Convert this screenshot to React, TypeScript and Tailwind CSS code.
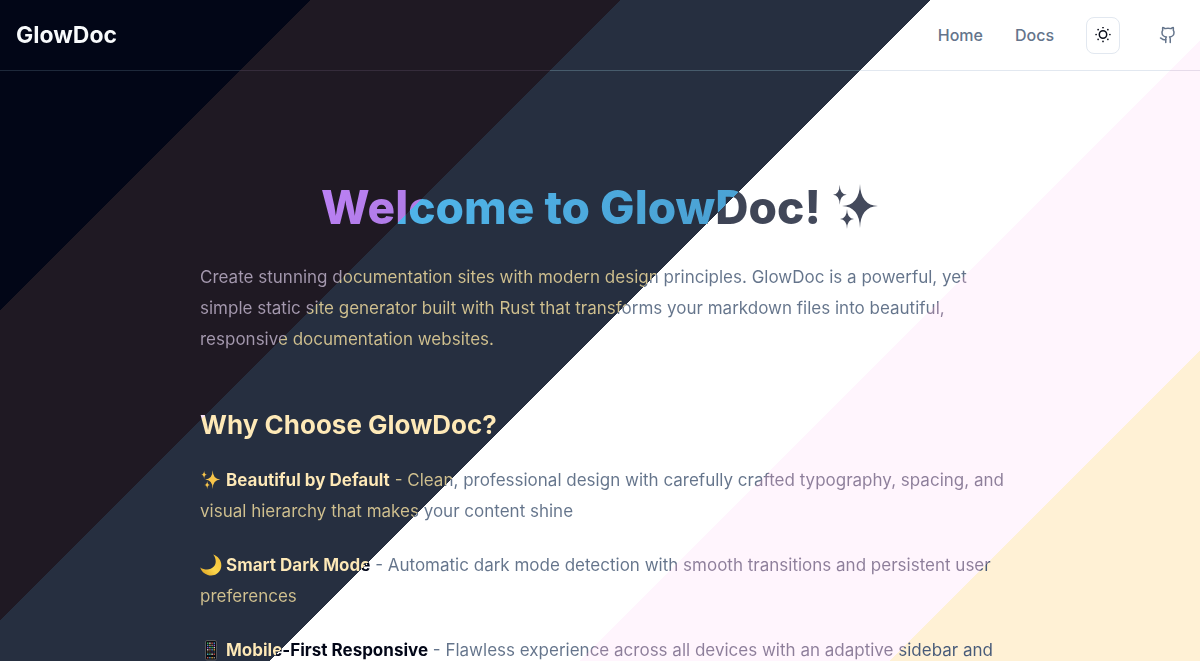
import React from "react";

/* Each swatch holds six theme colours, laid out as equal diagonal bands across the window. */
const surface =
  "bg-fixed bg-[linear-gradient(135deg,#020617_0_16.667%,#1f1923_16.667%_33.333%,#262f40_33.333%_50%,#ffffff_50%_66.667%,#fff5fd_66.667%_83.333%,#fff1d5_83.333%)]";
const line =
  "bg-fixed bg-[linear-gradient(135deg,#1e293b_0_16.667%,#352c3b_16.667%_33.333%,#475c6c_33.333%_50%,#e2e8f0_50%_66.667%,#e6dbea_66.667%_83.333%,#ecd9ac_83.333%)]";
const strongInk =
  "text-transparent bg-clip-text bg-fixed bg-[linear-gradient(135deg,#f8fafc_0_16.667%,#f5e1f7_16.667%_33.333%,#fee9b7_33.333%_50%,#020617_50%_66.667%,#3b2a45_66.667%_83.333%,#26324a_83.333%)]";
const bodyInk =
  "text-transparent bg-clip-text bg-fixed bg-[linear-gradient(135deg,#94a3b8_0_16.667%,#a599af_16.667%_33.333%,#d1c18f_33.333%_50%,#64748b_50%_66.667%,#8d7e9a_66.667%_83.333%,#475a78_83.333%)]";
const titleInk =
  "text-transparent bg-clip-text bg-fixed bg-[linear-gradient(135deg,#f8fafc_0_16.667%,#c084fc_25%,#b07be6_33.333%,#4fb4e9_33.333%,#4ba2d4_50%,#3d4354_50%,#4e5568_66.667%)]";

/* Four-pointed star with concave sides. */
const star = (x: number, y: number, rx: number, ry: number) =>
  `M${x} ${y - ry}Q${x + rx * 0.03} ${y - ry * 0.03} ${x + rx} ${y}Q${x + rx * 0.03} ${y + ry * 0.03} ${x} ${y + ry}Q${x - rx * 0.03} ${y + ry * 0.03} ${x - rx} ${y}Q${x - rx * 0.03} ${y - ry * 0.03} ${x} ${y - ry}Z`;

function Sparkles({ className, viewBox }: { className: string; viewBox: string }) {
  return (
    <svg viewBox={viewBox} className={className} fill="currentColor" aria-hidden="true">
      <path d={star(27, 22, 18, 22)} />
      <path d={star(6.7, 10.7, 7, 10)} />
      <path d={star(14, 35, 7, 10)} />
    </svg>
  );
}

function Moon() {
  return (
    <svg viewBox="0 0 22 22" className="size-[22px]" aria-hidden="true">
      <defs>
        <linearGradient id="moon" x1="0" y1="1" x2="1" y2="0">
          <stop offset="0" stopColor="#d99a1c" />
          <stop offset="0.45" stopColor="#fbd64c" />
          <stop offset="1" stopColor="#f2bd35" />
        </linearGradient>
      </defs>
      <path
        d="M13.2 .6C19 2.700 22.600 8.200 20.900 14.200C19.100 20 13.300 22.600 7.800 20.900C4 19.700 1.200 17 .2 13.400C4.500 16.300 10.400 16.600 13.800 12.600C16.800 9.100 16 4.200 13.200 .6Z"
        fill="url(#moon)"
      />
    </svg>
  );
}

const appDots = ["#4ad06a", "#e8e8e8", "#e2574c", "#4aa3e8", "#f0b63c", "#9a9a9a", "#b35ad6", "#55c8e8"];

function Phone() {
  return (
    <svg viewBox="0 0 22 22" className="size-[22px]" aria-hidden="true">
      <rect x="5.500" y="1.500" width="11" height="19.500" rx="1.500" fill="#0c0d11" stroke="#55565a" />
      {[0, 1, 2, 3, 4, 5, 6].flatMap((r) =>
        [0, 1, 2, 3].map((c) => (
          <rect
            key={`${r}-${c}`}
            x={7 + c * 2.2}
            y={r === 6 ? 18 : 3.5 + r * 2.2}
            width="1.4"
            height="1.4"
            fill={appDots[(r * 3 + c) % 8]}
            opacity={r === 4 ? 0.35 : 0.9}
          />
        )),
      )}
    </svg>
  );
}

function SunIcon() {
  const rays = [0, 45, 90, 135, 180, 225, 270, 315];
  return (
    <svg viewBox="0 0 16 16" className="size-4" aria-hidden="true">
      <circle cx="8" cy="7.500" r="3.700" fill="none" stroke="#0b0f1c" strokeWidth="1.500" />
      {rays.map((a) => (
        <circle key={a} cx="8" cy="0.600" r="0.850" fill="#0b0f1c" transform={`rotate(${a} 8 7.500)`} />
      ))}
    </svg>
  );
}

function GithubIcon() {
  return (
    <svg
      viewBox="0 0 24 24"
      className="size-[18px]"
      fill="none"
      stroke="#64748b"
      strokeWidth="2"
      strokeLinecap="round"
      strokeLinejoin="round"
      aria-hidden="true"
    >
      <path d="M15 22v-4a4.800 4.800 0 0 0-1-3.500c3 0 6-2 6-5.500.08-1.250-.27-2.480-1-3.500.28-1.150.28-2.350 0-3.500 0 0-1 0-3 1.500-2.640-.5-5.360-.5-8 0C6 2 5 2 5 2c-.3 1.150-.3 2.350 0 3.500A5.403 5.403 0 0 0 4 9c0 3.500 3 5.500 6 5.500-.39.49-.68 1.050-.85 1.650-.17.6-.22 1.230-.15 1.850v4" />
      <path d="M9 18c-4.510 2-5-2-7-2" />
    </svg>
  );
}

function Feature({ icon, title, text }: { icon: React.ReactNode; title: string; text: string }) {
  return (
    <p className="text-[17px] leading-[31px]">
      <span className="mr-1 inline-block align-[-5px]">{icon}</span>
      <strong className={`font-bold ${strongInk}`}>{title}</strong> <span className={bodyInk}>- {text}</span>
    </p>
  );
}

export default function App() {
  return (
    <div className={`h-screen overflow-hidden font-['Inter',sans-serif] ${surface}`}>
      <header>
        <nav className="flex h-[70px] items-center justify-between px-4">
          <a href="#top" className={`text-[23px] leading-8 font-bold ${strongInk}`}>
            GlowDoc
          </a>
          <div className="flex items-center gap-8 font-medium text-[#64748b]">
            <a href="#home">Home</a>
            <a href="#docs">Docs</a>
            <button
              type="button"
              aria-label="Toggle theme"
              className="flex h-[37px] w-[34px] items-center justify-center rounded-lg border border-[#e2e8f0]"
            >
              <SunIcon />
            </button>
            <a href="#github" aria-label="GitHub" className="p-[7px]">
              <GithubIcon />
            </a>
          </div>
        </nav>
        <div className={`h-px ${line}`} />
      </header>
      <main className="mx-auto flex max-w-[800px] flex-col pt-[107px]">
        <h1 className="flex items-center justify-center gap-3 text-[46px] leading-[58px] font-extrabold">
          <span className={titleInk}>Welcome to GlowDoc!</span>
          <Sparkles className="size-[46px] text-[#444a5c]" viewBox="0 0 46 46" />
        </h1>
        <p className={`mt-[26px] text-[17px] leading-[31px] ${bodyInk}`}>
          Create stunning documentation sites with modern design principles. GlowDoc is a powerful, yet simple static
          site generator built with Rust that transforms your markdown files into beautiful, responsive documentation
          websites.
        </p>
        <h2 className={`mt-[52px] text-[26px] leading-9 font-bold ${strongInk}`}>Why Choose GlowDoc?</h2>
        <div className="mt-[22px] -mr-4 flex flex-col gap-[23px]">
          <Feature
            icon={<Sparkles className="size-[22px] text-[#f8c54a]" viewBox="-3 -2 52 50" />}
            title="Beautiful by Default"
            text="Clean, professional design with carefully crafted typography, spacing, and visual hierarchy that makes your content shine"
          />
          <Feature
            icon={<Moon />}
            title="Smart Dark Mode"
            text="Automatic dark mode detection with smooth transitions and persistent user preferences"
          />
          <Feature
            icon={<Phone />}
            title="Mobile-First Responsive"
            text="Flawless experience across all devices with an adaptive sidebar and"
          />
        </div>
      </main>
    </div>
  );
}
